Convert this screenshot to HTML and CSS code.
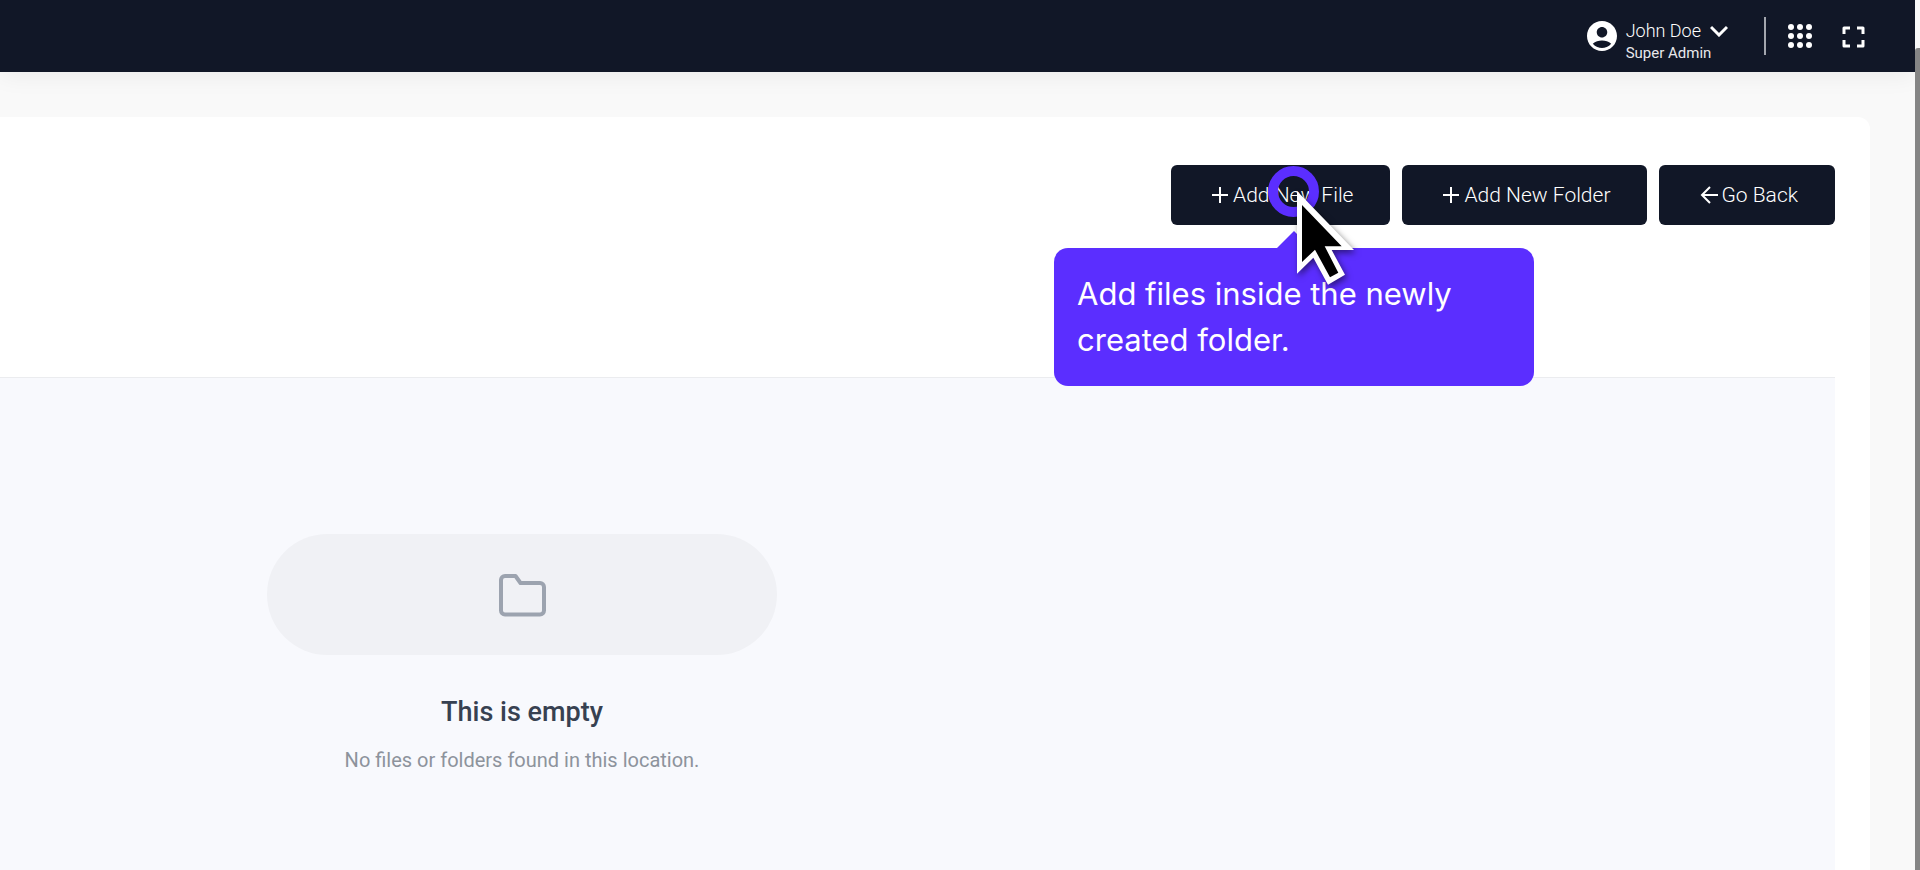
FILE: index.html
```html
<!DOCTYPE html>
<html lang="en">
<head>
    <meta charset="UTF-8">
    <meta name="viewport" content="width=device-width, initial-scale=1.0">
    <title>File Manager</title>
    <link rel="stylesheet" href="styles.css">
</head>
<body>
    <div class="page">
        <!-- Top bar -->
        <header class="topbar">
            <button type="button" class="profile">
                <svg class="icon-lg" viewBox="0 0 24 24" fill="currentColor" aria-hidden="true">
                    <path d="M12 2C6.480 2 2 6.480 2 12s4.480 10 10 10 10-4.480 10-10S17.520 2 12 2zm0 4c1.930 0 3.500 1.570 3.500 3.500S13.930 13 12 13s-3.500-1.570-3.500-3.500S10.070 6 12 6zm0 14c-2.030 0-4.430-.820-6.140-2.880C7.550 15.800 9.680 15 12 15s4.450.800 6.140 2.120C16.430 19.180 14.030 20 12 20z"/>
                </svg>
                <span class="profile-text">
                    <span class="profile-name">John Doe
                        <svg class="chevron" viewBox="0 0 18 12" fill="none" stroke="currentColor" stroke-width="3" aria-hidden="true">
                            <path d="M1 2l8 8 8-8"/>
                        </svg>
                    </span>
                    <span class="profile-role">Super Admin</span>
                </span>
            </button>
            <span class="divider"></span>
            <button type="button" class="icon-btn" aria-label="Apps">
                <svg class="icon-lg" viewBox="0 0 36 36" fill="currentColor" aria-hidden="true">
                    <circle cx="9" cy="9" r="3"/><circle cx="18" cy="9" r="3"/><circle cx="27" cy="9" r="3"/>
                    <circle cx="9" cy="18" r="3"/><circle cx="18" cy="18" r="3"/><circle cx="27" cy="18" r="3"/>
                    <circle cx="9" cy="27" r="3"/><circle cx="18" cy="27" r="3"/><circle cx="27" cy="27" r="3"/>
                </svg>
            </button>
            <button type="button" class="icon-btn" aria-label="Fullscreen">
                <svg class="icon-lg" viewBox="0 0 36 36" fill="none" stroke="currentColor" stroke-width="3" stroke-linejoin="round" aria-hidden="true">
                    <path d="M9 16v-6h6M22 10h6v6M28 22v6h-6M15 28H9v-6"/>
                </svg>
            </button>
        </header>

        <!-- File manager card -->
        <main class="card">
            <div class="actions">
                <div class="action-wrap">
                    <button type="button" class="btn" aria-describedby="tip">
                        <svg class="icon" viewBox="0 0 24 24" fill="none" stroke="currentColor" stroke-width="2" aria-hidden="true">
                            <path d="M12 4v16M4 12h16"/>
                        </svg>
                        Add New File
                    </button>
                    <div class="tooltip" id="tip" role="tooltip">Add files inside the newly created folder.</div>
                    <span class="ring"></span>
                    <svg class="cursor" viewBox="0 0 174 288" aria-hidden="true">
                        <path fill="#fff" d="M0 0V248L49 200 93 281 144 251 104 177H171z"/>
                        <path fill="#000" d="M15 42V213L54 176 99 259 124 245 83 166H134z"/>
                    </svg>
                </div>
                <button type="button" class="btn">
                    <svg class="icon" viewBox="0 0 24 24" fill="none" stroke="currentColor" stroke-width="2" aria-hidden="true">
                        <path d="M12 4v16M4 12h16"/>
                    </svg>
                    Add New Folder
                </button>
                <button type="button" class="btn">
                    <svg class="icon" viewBox="0 0 24 24" fill="none" stroke="currentColor" stroke-width="2" aria-hidden="true">
                        <path d="M22 12H6M14 4l-8 8 8 8"/>
                    </svg>
                    Go Back
                </button>
            </div>

            <section class="files">
                <div class="empty">
                    <div class="empty-icon">
                        <svg class="folder" viewBox="-1 -1 48 44" fill="none" stroke="currentColor" stroke-width="4" stroke-linejoin="round" aria-hidden="true">
                            <path d="M6 2h10.500l5 7H41a4 4 0 0 1 4 4v23.500a4 4 0 0 1-4 4H6a4 4 0 0 1-4-4V6a4 4 0 0 1 4-4z"/>
                        </svg>
                    </div>
                    <h2>This is empty</h2>
                    <p>No files or folders found in this location.</p>
                </div>
            </section>
        </main>
    </div>

    <div class="scrollbar"><div class="scroll-thumb"></div></div>
</body>
</html>
```
FILE: styles.css
```css
* {
    margin: 0;
    padding: 0;
    box-sizing: border-box;
}

body {
    display: flex;
    height: 100vh;
    overflow: hidden;
    background: #f9f9f9;
    font-family: Roboto, 'Liberation Sans', sans-serif;
    font-weight: 300;
}

button {
    border: none;
    background: none;
    color: #fff;
    font: inherit;
    cursor: pointer;
}

.page {
    flex: 1;
    display: flex;
    flex-direction: column;
}

/* Top bar */
.topbar {
    display: flex;
    align-items: center;
    justify-content: flex-end;
    height: 72px;
    padding-right: 44px;
    background: #111727;
    box-shadow: 0 4px 24px rgba(0, 0, 0, 0.06);
}

.profile {
    display: flex;
    align-items: center;
    gap: 6px;
    text-align: left;
}

.profile-text {
    display: flex;
    flex-direction: column;
    padding-top: 10px;
}

.profile-name {
    display: flex;
    align-items: center;
    gap: 9px;
    font-size: 18px;
    line-height: 24px;
}

.profile-role {
    color: #e8e8ec;
    font-size: 15px;
    font-weight: 400;
    line-height: 20px;
}

.chevron {
    width: 18px;
    height: 12px;
}

.icon-lg {
    display: block;
    width: 36px;
    height: 36px;
}

.divider {
    width: 2px;
    height: 38px;
    margin: 0 16px 0 36px;
    background: #a3a6ae;
}

.icon-btn + .icon-btn {
    margin-left: 17px;
}

/* Card */
.card {
    flex: 1;
    display: flex;
    flex-direction: column;
    margin: 45px 45px 0 0;
    padding: 48px 35px 0 0;
    border-top-right-radius: 12px;
    background: #fff;
}

.actions {
    display: flex;
    justify-content: flex-end;
    gap: 12px;
}

.action-wrap {
    position: relative;
}

.btn {
    display: flex;
    align-items: center;
    gap: 1px;
    height: 60px;
    padding: 0 37px;
    border-radius: 6px;
    background: #111727;
    font-size: 21px;
    white-space: nowrap;
}

.icon {
    width: 24px;
    height: 24px;
}

/* Guide overlay */
.tooltip {
    position: absolute;
    top: 83px;
    left: -117px;
    width: 480px;
    padding: 23px;
    border-radius: 14px;
    background: #5b2eff;
    color: #fff;
    font-family: Inter, sans-serif;
    font-size: 31px;
    font-weight: 400;
    line-height: 46px;
}

.tooltip::before {
    content: '';
    position: absolute;
    bottom: 100%;
    left: 50%;
    margin-left: -17px;
    border: 17px solid transparent;
    border-top: none;
    border-bottom-color: #5b2eff;
}

.ring {
    position: absolute;
    top: 1px;
    left: 97px;
    width: 51px;
    height: 51px;
    border: 10px solid #5b2eff;
    border-radius: 50%;
}

.cursor {
    position: absolute;
    top: 26px;
    left: 126px;
    width: 58px;
    height: 96px;
    overflow: visible;
    filter: drop-shadow(2px 3px 3px rgba(0, 0, 0, 0.5));
}

/* File list */
.files {
    flex: 1;
    margin-top: 152px;
    padding: 156px 0 0 267px;
    border-top: 1px solid #ebecef;
    background: #f8f9fd;
}

.empty {
    width: 510px;
    text-align: center;
}

.empty-icon {
    display: flex;
    align-items: center;
    justify-content: center;
    height: 121px;
    margin-bottom: 40px;
    border-radius: 61px;
    background: #f0f1f5;
    color: #9ca3af;
}

.folder {
    width: 48px;
    height: 44px;
}

.empty h2 {
    margin-bottom: 16px;
    color: #374151;
    font-size: 27px;
    font-weight: 500;
    line-height: 34px;
}

.empty p {
    color: #8d939c;
    font-size: 20px;
    font-weight: 400;
    line-height: 30px;
}

/* Scrollbar */
.scrollbar {
    width: 5px;
    padding-top: 48px;
    background: #f9f9f9;
}

.scroll-thumb {
    height: 100%;
    border-radius: 3px 0 0 0;
    background: #858585;
}
```
